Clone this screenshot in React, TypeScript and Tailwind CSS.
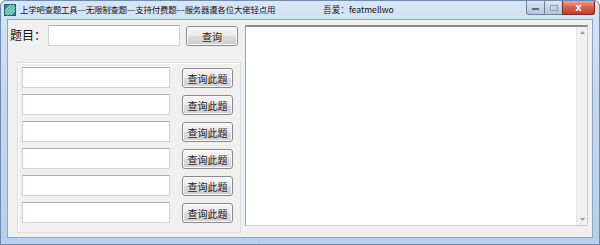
import React from 'react';

const cjk = { fontFamily: '"Noto Sans CJK SC", "Noto Sans", sans-serif' };

function TextBox({ className = '' }: { className?: string }) {
  return (
    <div
      className={`bg-white border border-[#cfd2d8] border-t-[#abadb3] rounded-[1px] ${className}`}
    />
  );
}

function Button({ label, className = '' }: { label: string; className?: string }) {
  return (
    <button
      className={`flex items-center justify-center rounded-[3px] border border-[#8a8a8a] bg-[linear-gradient(#f6f6f6,#ebebeb_48%,#dcdcdc_52%,#cfcfcf)] text-[10px] text-[#1a1a1a] shadow-[inset_0_0_0_1px_#fcfcfc] ${className}`}
      style={cjk}
    >
      {label}
    </button>
  );
}

function AppIcon() {
  return (
    <svg width="12" height="12" viewBox="0 0 12 12">
      <rect x="0.5" y="0.5" width="11" height="11" fill="#2f8f9d" stroke="#1d5f78" />
      <path d="M1 7 L7 1 M1 10 L10 1 M3 11 L11 3 M6 11 L11 6" stroke="#9fe3c8" strokeWidth="1.2" />
    </svg>
  );
}

export default function App() {
  const rows = [0, 1, 2, 3, 4, 5];
  return (
    <div className="w-[600px] h-[245px] flex flex-col bg-[linear-gradient(#d7e5f5,#c4d8ee_40%,#b9d0ea)] border border-[#6e8bb0] rounded-t-[6px] overflow-hidden" style={cjk}>
      {/* title bar */}
      <div className="h-[18px] flex items-start shrink-0">
        <div className="pl-[3px] pt-[3px]">
          <AppIcon />
        </div>
        <div className="ml-[4px] mt-[3px] text-[8.4px] leading-[11px] text-[#111] tracking-[-0.15px] whitespace-nowrap">
          上学吧查题工具---无限制查题---支持付费题---服务器遭各位大佬轻点用
        </div>
        <div className="ml-[48px] mt-[3px] text-[8.6px] leading-[11px] text-[#111] whitespace-nowrap">
          吾爱：featmellwo
        </div>
        <div className="ml-auto mr-[4px] flex h-[14px]">
          <div className="w-[19px] h-[14px] border border-[#6d7f99] border-t-0 rounded-bl-[3px] bg-[linear-gradient(#dfe8f3,#c5d3e5_50%,#b5c6dc)] flex items-center justify-center">
            <div className="w-[7px] h-[2px] bg-white border border-[#5b6d87] mt-[3px]" />
          </div>
          <div className="w-[17px] h-[14px] border-b border-[#6d7f99] bg-[linear-gradient(#dfe8f3,#c5d3e5_50%,#b5c6dc)] flex items-center justify-center">
            <div className="w-[8px] h-[6px] border border-[#8fa2bd]" />
          </div>
          <div className="w-[33px] h-[14px] border border-[#7a2a22] border-t-0 rounded-br-[3px] bg-[linear-gradient(#e8a497,#d2604d_50%,#c23d2b)] flex items-center justify-center">
            <span className="text-white text-[10px] leading-none font-bold" style={{ fontFamily: '"DejaVu Sans", sans-serif' }}>x</span>
          </div>
        </div>
      </div>

      {/* body with frame */}
      <div className="flex-1 flex px-[6px] pb-[6px]">
        <div className="flex-1 flex bg-[#f0f0f0] border border-[#8ea6c6] pt-[5px]">
          {/* left column */}
          <div className="w-[236px] flex flex-col">
            <div className="flex items-start">
              <div className="w-[40px] pl-[2px] pt-[3px] text-[12px] leading-[14px] text-[#111]">题目：</div>
              <TextBox className="w-[132px] h-[21px]" />
              <Button label="查询" className="ml-[6px] w-[52px] h-[20px] mt-[1px]" />
            </div>
            <div className="ml-[9px] mt-[16px] w-[224px] h-[171px] border border-[#d5dfe5] shadow-[inset_1px_1px_0_#ffffff] pl-[4px] pt-[4px] flex flex-col gap-[6px]">
              {rows.map((r) => (
                <div key={r} className="flex items-start">
                  <TextBox className="w-[148px] h-[21px]" />
                  <Button label="查询此题" className="ml-[12px] w-[51px] h-[20px] mt-[1px]" />
                </div>
              ))}
            </div>
          </div>
          {/* right text area */}
          <div className="ml-[1px] w-[343px] h-[201px] bg-white border border-[#c9ccd2] border-t-[2px] border-t-[#8c8c8c] border-l-[#a0a0a0] flex justify-end">
            <div className="w-[11px] h-full bg-[#f0f0f0] border-l border-[#e6e6e6] flex flex-col justify-between items-center py-[4px]">
              <svg width="5" height="3" viewBox="0 0 5 3"><path d="M0 3 L2.5 0 L5 3 Z" fill="#9a9a9a" /></svg>
              <svg width="5" height="3" viewBox="0 0 5 3"><path d="M0 0 L2.5 3 L5 0 Z" fill="#9a9a9a" /></svg>
            </div>
          </div>
        </div>
      </div>
    </div>
  );
}
